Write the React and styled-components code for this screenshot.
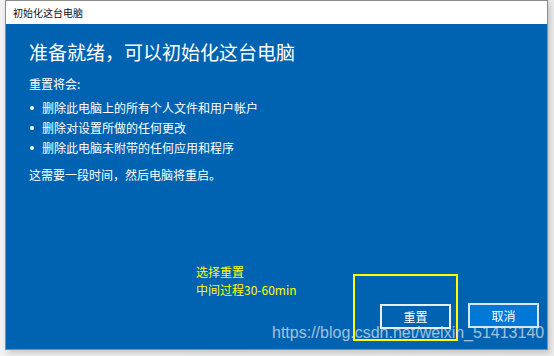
import React from 'react'
import styled, { createGlobalStyle } from 'styled-components'

const Global = createGlobalStyle`
  html, body {
    margin: 0;
    padding: 0;
    background: #ececec;
  }
  body {
    font-family: "Noto Sans CJK SC", "Noto Sans", sans-serif;
  }
`

const Page = styled.div`
  width: 554px;
  height: 356px;
  overflow: hidden;
  position: relative;
  background: linear-gradient(90deg, #f2f2f2 0%, #ececec 100%);
`

const Window = styled.div`
  margin-left: 5px;
  width: 541px;
  height: 348px;
  border: 1px solid #8c8c8c;
  display: flex;
  flex-direction: column;
  box-shadow: 2px 3px 6px rgba(0, 0, 0, 0.18);
`

const TitleBar = styled.div`
  height: 23px;
  background: #fff;
  display: flex;
  align-items: center;
  padding-left: 7px;
  font-size: 10px;
  color: #111;
`

const Body = styled.div`
  position: relative;
  flex: 1;
  background: #0063b1;
  color: #fff;
  padding: 0 8px 20px 23px;
  display: flex;
  flex-direction: column;
`

const Heading = styled.h1`
  margin: 15px 0 0;
  font-size: 19px;
  font-weight: 400;
  line-height: 26px;
`

const Lead = styled.p`
  margin: 11px 0 0;
  font-size: 12px;
  line-height: 16px;
`

const List = styled.ul`
  margin: 6px 0 0;
  padding: 0;
  list-style: none;
`

const Item = styled.li`
  font-size: 12px;
  line-height: 20px;
  display: flex;
  align-items: center;

  &::before {
    content: '';
    width: 4px;
    height: 4px;
    border-radius: 50%;
    background: #fff;
    margin: 0 8px 0 1px;
    flex: none;
  }
`

const Note = styled.p`
  margin: 9px 0 0;
  font-size: 12px;
  line-height: 16px;
`

const Footer = styled.div`
  margin-top: auto;
  display: flex;
  justify-content: flex-end;
  gap: 17px;
`

const ButtonWrap = styled.div`
  position: relative;
`

const Button = styled.button`
  width: 71px;
  height: 25px;
  box-sizing: border-box;
  border: 2px solid ${({ primary }) => (primary ? '#d6e6f5' : '#e8eef5')};
  background: ${({ primary }) => (primary ? '#0078d7' : 'transparent')};
  color: #fff;
  font-family: inherit;
  font-size: 12px;
  padding: 0;
`

const Highlight = styled.div`
  position: absolute;
  left: -27px;
  top: -29px;
  width: 101px;
  height: 63px;
  border: 2px solid #ffff00;
  pointer-events: none;
`

const Annotation = styled.div`
  position: absolute;
  left: 190px;
  top: 239px;
  color: #ffff00;
  font-size: 12px;
  line-height: 17.5px;
`

const AnnotationLine = styled.div`
  white-space: nowrap;
`

const Watermark = styled.div`
  position: absolute;
  left: 272px;
  top: 323px;
  font-family: "Liberation Sans", Arial, sans-serif;
  font-size: 16px;
  line-height: 20px;
  color: rgba(225, 232, 240, 0.72);
  white-space: nowrap;
`

const items = [
  '删除此电脑上的所有个人文件和用户帐户',
  '删除对设置所做的任何更改',
  '删除此电脑未附带的任何应用和程序',
]

export default function App() {
  return (
    <>
      <Global />
      <Page>
        <Window>
          <TitleBar>初始化这台电脑</TitleBar>
          <Body>
            <Heading>准备就绪，可以初始化这台电脑</Heading>
            <Lead>重置将会:</Lead>
            <List>
              {items.map((t) => (
                <Item key={t}>{t}</Item>
              ))}
            </List>
            <Note>这需要一段时间，然后电脑将重启。</Note>
            <Annotation>
              <AnnotationLine>选择重置</AnnotationLine>
              <AnnotationLine>中间过程30-60min</AnnotationLine>
            </Annotation>
            <Footer>
              <ButtonWrap>
                <Button>重置</Button>
                <Highlight />
              </ButtonWrap>
              <Button primary>取消</Button>
            </Footer>
          </Body>
        </Window>
        <Watermark>https://blog.csdn.net/weixin_51413140</Watermark>
      </Page>
    </>
  )
}
